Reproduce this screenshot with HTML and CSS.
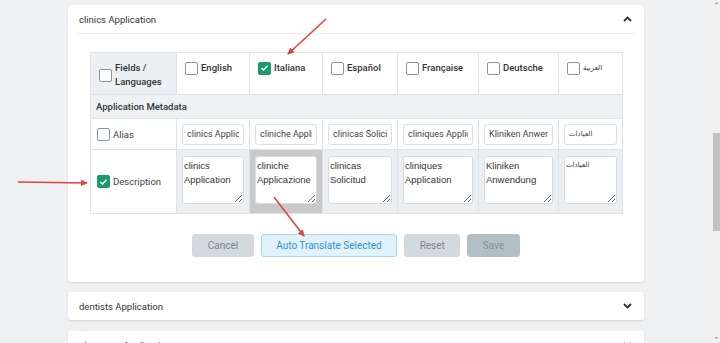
FILE: index.html
```html
<!DOCTYPE html>
<html lang="en">
<head>
    <meta charset="UTF-8">
    <meta name="viewport" content="width=device-width, initial-scale=1.0">
    <title>Translations</title>
    <link rel="stylesheet" href="styles.css">
</head>
<body>
    <div class="page">
        <main class="content">
            <section class="card">
                <div class="card-head open">
                    <span>clinics Application</span>
                    <svg class="chev" width="9" height="6" viewBox="0 0 9 6"><path d="M1 5 L4.5 1.5 L8 5" fill="none" stroke="#333" stroke-width="1.8"/></svg>
                </div>
                <div class="card-body">
                    <table class="tr-table">
                        <colgroup>
                            <col style="width: 86px">
                            <col style="width: 73px">
                            <col style="width: 73px">
                            <col style="width: 75px">
                            <col style="width: 81px">
                            <col style="width: 80px">
                            <col style="width: 64px">
                        </colgroup>
                        <tr class="lang-row">
                            <th class="field-cell">
                                <label class="check"><span class="box"></span><span>Fields /<br>Languages</span></label>
                            </th>
                            <th><label class="check"><span class="box"></span><span>English</span></label></th>
                            <th><label class="check"><span class="box checked"><svg width="9" height="8" viewBox="0 0 9 8"><path d="M1.5 4.2 L3.5 6 L7.5 1.8" fill="none" stroke="#fff" stroke-width="1.6"/></svg></span><span>Italiana</span></label></th>
                            <th><label class="check"><span class="box"></span><span>Español</span></label></th>
                            <th><label class="check"><span class="box"></span><span>Française</span></label></th>
                            <th><label class="check"><span class="box"></span><span>Deutsche</span></label></th>
                            <th><label class="check"><span class="box"></span><span class="ar">العربية</span></label></th>
                        </tr>
                        <tr class="group-row">
                            <td colspan="7">Application Metadata</td>
                        </tr>
                        <tr class="alias-row">
                            <td class="field-name"><label class="check"><span class="box"></span><span>Alias</span></label></td>
                            <td><input type="text" value="clinics Application"></td>
                            <td><input type="text" value="cliniche Applicazione"></td>
                            <td><input type="text" value="clinicas Solicitud"></td>
                            <td><input type="text" value="cliniques Application"></td>
                            <td><input type="text" value="Kliniken Anwendung"></td>
                            <td><input type="text" class="ar" value="العيادات"></td>
                        </tr>
                        <tr class="desc-row">
                            <td class="field-name"><label class="check"><span class="box checked"><svg width="9" height="8" viewBox="0 0 9 8"><path d="M1.5 4.2 L3.5 6 L7.5 1.8" fill="none" stroke="#fff" stroke-width="1.6"/></svg></span><span>Description</span></label></td>
                            <td><textarea>clinics Application</textarea></td>
                            <td class="active"><textarea>cliniche Applicazione</textarea></td>
                            <td><textarea>clinicas Solicitud</textarea></td>
                            <td><textarea>cliniques Application</textarea></td>
                            <td><textarea>Kliniken Anwendung</textarea></td>
                            <td><textarea class="ar">العيادات</textarea></td>
                        </tr>
                    </table>

                    <div class="actions">
                        <button class="btn btn-grey">Cancel</button>
                        <button class="btn btn-blue">Auto Translate Selected</button>
                        <button class="btn btn-grey">Reset</button>
                        <button class="btn btn-save">Save</button>
                    </div>
                </div>
            </section>

            <section class="card closed">
                <div class="card-head">
                    <span>dentists Application</span>
                    <svg class="chev" width="9" height="6" viewBox="0 0 9 6"><path d="M1 1 L4.5 4.5 L8 1" fill="none" stroke="#333" stroke-width="1.8"/></svg>
                </div>
            </section>

            <section class="card closed">
                <div class="card-head">
                    <span>pharmacy Application</span>
                    <svg class="chev" width="9" height="6" viewBox="0 0 9 6"><path d="M1 1 L4.5 4.5 L8 1" fill="none" stroke="#333" stroke-width="1.8"/></svg>
                </div>
            </section>
        </main>

        <div class="scrollbar">
            <svg width="7" height="6" viewBox="0 0 7 6"><path d="M1.5 4 L3.5 2 L5.5 4 Z" fill="#a3a3a3"/></svg>
            <div class="thumb"></div>
            <svg class="down" width="7" height="6" viewBox="0 0 7 6"><path d="M1.5 2 L3.5 4 L5.5 2 Z" fill="#a3a3a3"/></svg>
        </div>

        <!-- annotation arrows drawn over the screenshot -->
        <svg class="arrows" width="720" height="343" viewBox="0 0 720 343">
            <defs>
                <marker id="head" markerWidth="8" markerHeight="8" refX="6" refY="4" orient="auto" markerUnits="userSpaceOnUse">
                    <path d="M0 0.8 L7 4 L0 7.2 Z" fill="#e2453c"/>
                </marker>
            </defs>
            <line x1="326" y1="19" x2="288" y2="54" stroke="#e2453c" stroke-width="1.6" marker-end="url(#head)"/>
            <line x1="18" y1="182" x2="87" y2="183" stroke="#e2453c" stroke-width="1.6" marker-end="url(#head)"/>
            <line x1="274" y1="197" x2="304" y2="236" stroke="#e2453c" stroke-width="1.6" marker-end="url(#head)"/>
        </svg>
    </div>
</body>
</html>
```

FILE: styles.css
```css
html, body {
    margin: 0;
    padding: 0;
    height: 100%;
    overflow: hidden;
}

body {
    font-family: Roboto, "Liberation Sans", "Noto Sans Arabic", "DejaVu Sans", sans-serif;
    background-color: #eff0f2;
    color: #333;
    font-size: 9.5px;
}

.page {
    position: relative;
    display: flex;
    height: 343px;
}

.content {
    flex: 1;
    padding: 5px 0 0 68px;
}

.card {
    width: 576px;
    background-color: #fff;
    border-radius: 3px;
    box-shadow: 0 1px 2px rgba(0, 0, 0, 0.13);
}

.card.closed {
    margin-top: 10px;
}

.card.closed + .card.closed {
    margin-top: 11px;
}

.card-head {
    height: 28px;
    margin: 0 9px 0 10px;
    padding: 0 3px 0 1px;
    display: flex;
    justify-content: space-between;
    align-items: center;
    font-size: 9.5px;
    color: #333;
}

.card-head.open {
    border-bottom: 1px solid #eceef0;
}

.card-body {
    padding: 18px 22px 25px 22px;
}

/* translation table */
.tr-table {
    width: 532px;
    border-collapse: collapse;
    table-layout: fixed;
    border: 1px solid #dfe3e7;
}

.tr-table th,
.tr-table td {
    border: 1px solid #dfe3e7;
    padding: 0;
}

.lang-row {
    height: 42px;
}

.lang-row th {
    vertical-align: top;
    text-align: left;
    padding: 8px 0 0 8px;
    font-weight: 500;
    color: #333;
    line-height: 14px;
}

.lang-row .field-cell {
    background-color: #edf0f3;
}

.check {
    display: flex;
    align-items: center;
    gap: 3px;
}

.box {
    width: 13px;
    height: 13px;
    box-sizing: border-box;
    border: 1.5px solid #8995a0;
    border-radius: 2px;
    background-color: #fff;
    flex-shrink: 0;
    display: flex;
    align-items: center;
    justify-content: center;
}

.box.checked {
    border-color: #1b9a6c;
    background-color: #1b9a6c;
}

.ar {
    font-family: "DejaVu Sans", "Noto Sans", sans-serif;
    font-size: 7px;
}

.group-row {
    height: 24px;
}

.group-row td {
    background-color: #eef1f4;
    padding-left: 5px;
    font-weight: 500;
    color: #333;
}

.alias-row {
    height: 31px;
}

.tr-table .field-name {
    padding: 0 0 0 6px;
    color: #444;
}

.alias-row td {
    padding: 0 5px 0 5px;
}

input[type="text"] {
    width: 100%;
    height: 21px;
    box-sizing: border-box;
    border: 1px solid #d9dee3;
    border-radius: 3px;
    padding: 0 4px;
    font-family: Roboto, "Liberation Sans", sans-serif;
    font-size: 9px;
    color: #444;
    display: block;
}

input[type="text"].ar {
    font-family: "DejaVu Sans", sans-serif;
    font-size: 7px;
}

.desc-row {
    height: 64px;
}

.desc-row td {
    background-color: #eceff2;
    vertical-align: top;
    padding: 6px 5px 0 5px;
}

.desc-row td.field-name {
    background-color: #fff;
    vertical-align: middle;
    padding: 0 0 0 6px;
}

.desc-row td.active {
    background-color: #c9c9c9;
}

textarea {
    width: 100%;
    height: 48px;
    box-sizing: border-box;
    border: 1px solid #d5dbe0;
    border-radius: 3px;
    padding: 2px 1px;
    font-family: "Liberation Sans", Arial, sans-serif;
    font-size: 9.5px;
    line-height: 13.5px;
    color: #333;
    display: block;
    resize: both;
    overflow: hidden;
}

textarea.ar {
    font-family: "DejaVu Sans", sans-serif;
    font-size: 7px;
}

/* buttons */
.actions {
    margin-top: 20px;
    display: flex;
    justify-content: center;
    gap: 7px;
}

.btn {
    height: 23px;
    padding: 0 14.5px;
    border-radius: 3px;
    font-family: Roboto, "Liberation Sans", sans-serif;
    font-size: 10px;
    border: 1px solid transparent;
}

.btn-grey {
    background-color: #d3dadf;
    border-color: #d3dadf;
    color: #77848e;
}

.btn-blue {
    background-color: #e1f2fc;
    border-color: #a6d6f2;
    color: #2f93d3;
}

.btn-save {
    background-color: #b2bfc6;
    border-color: #b2bfc6;
    color: #85939b;
}

/* fake scrollbar */
.scrollbar {
    width: 7px;
    background-color: #f1f1f1;
    display: flex;
    flex-direction: column;
    align-items: center;
}

.scrollbar .thumb {
    width: 7px;
    height: 98px;
    margin-top: 127px;
    background-color: #c1c1c1;
}

.scrollbar .down {
    margin-top: auto;
    margin-bottom: 2px;
}

.arrows {
    position: absolute;
    top: 0;
    left: 0;
    pointer-events: none;
}
```
